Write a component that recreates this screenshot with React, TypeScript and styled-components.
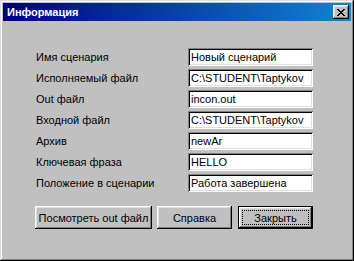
import { Fragment } from "react";
import styled, { createGlobalStyle } from "styled-components";

const GlobalStyle = createGlobalStyle`
  html, body {
    margin: 0;
    padding: 0;
    background: #c0c0c0;
  }
  * {
    box-sizing: border-box;
  }
`;

const Window = styled.div`
  width: 354px;
  height: 261px;
  padding: 3px;
  background: #c0c0c0;
  box-shadow: inset -1px -1px #000, inset 1px 1px #dfdfdf,
    inset -2px -2px #808080, inset 2px 2px #fff;
  font-family: "Liberation Sans", Arial, sans-serif;
  font-size: 11px;
  color: #000;
  display: flex;
  flex-direction: column;
`;

const TitleBar = styled.div`
  height: 18px;
  display: flex;
  align-items: center;
  justify-content: space-between;
  padding: 0 2px 0 4px;
  background: linear-gradient(to right, #000080, #1084d0);
  color: #fff;
  font-weight: bold;
  font-size: 11px;
`;

const CloseButton = styled.button`
  width: 16px;
  height: 14px;
  padding: 0;
  border: none;
  background: #c0c0c0;
  box-shadow: inset -1px -1px #000, inset 1px 1px #fff,
    inset -2px -2px #808080, inset 2px 2px #dfdfdf;
  display: flex;
  align-items: center;
  justify-content: center;
`;

const Content = styled.div`
  padding: 27px 0 0 32px;
  display: flex;
  flex-direction: column;
`;

const Fields = styled.div`
  display: grid;
  grid-template-columns: 153px 125px;
  row-gap: 3px;
  align-items: center;
`;

const Label = styled.span`
  padding-left: 1px;
  line-height: 18px;
  white-space: nowrap;
`;

const Field = styled.div`
  height: 18px;
  background: #fff;
  box-shadow: inset 1px 1px #808080, inset -1px -1px #fff,
    inset 2px 2px #000, inset -2px -2px #dfdfdf;
  padding: 0 2px 0 3px;
  line-height: 18px;
  white-space: nowrap;
  overflow: hidden;
`;

const Buttons = styled.div`
  display: flex;
  gap: 5px;
  margin-top: 14px;
`;

const Button = styled.button<{ $width: number; $default?: boolean }>`
  width: ${(p) => p.$width}px;
  height: 23px;
  padding: 0;
  border: ${(p) => (p.$default ? "1px solid #000" : "none")};
  background: #c0c0c0;
  font-family: inherit;
  font-size: 11px;
  color: #000;
  box-shadow: inset -1px -1px #000, inset 1px 1px #fff,
    inset -2px -2px #808080, inset 2px 2px #dfdfdf;
  display: flex;
  align-items: center;
  justify-content: center;
  margin-left: ${(p) => (p.$default ? "1px" : "0")};
`;

const Focus = styled.span`
  width: calc(100% - 6px);
  height: calc(100% - 6px);
  border: 1px dotted #000;
  display: flex;
  align-items: center;
  justify-content: center;
`;

const rows: [string, string][] = [
  ["Имя сценария", "Новый сценарий"],
  ["Исполняемый файл", "C:\\STUDENT\\Taptykov"],
  ["Out файл", "incon.out"],
  ["Входной файл", "C:\\STUDENT\\Taptykov"],
  ["Архив", "newAr"],
  ["Ключевая фраза", "HELLO"],
  ["Положение в сценарии", "Работа завершена"],
];

export default function App() {
  return (
    <>
      <GlobalStyle />
      <Window>
        <TitleBar>
          <span>Информация</span>
          <CloseButton>
            <svg width="8" height="7" viewBox="0 0 8 7">
              <path
                d="M0 0h2v1h1v1h2v-1h1v-1h2v1h-1v1h-1v1h-1v1h1v1h1v1h1v1h-2v-1h-1v-1h-2v1h-1v1h-2v-1h1v-1h1v-1h1v-1h-1v-1h-1v-1h-1z"
                fill="#000"
              />
            </svg>
          </CloseButton>
        </TitleBar>
        <Content>
          <Fields>
            {rows.map(([label, value]) => (
              <Fragment key={label}>
                <Label>{label}</Label>
                <Field>{value}</Field>
              </Fragment>
            ))}
          </Fields>
          <Buttons>
            <Button $width={117}>Посмотреть out файл</Button>
            <Button $width={75}>Справка</Button>
            <Button $width={75} $default>
              <Focus>Закрыть</Focus>
            </Button>
          </Buttons>
        </Content>
      </Window>
    </>
  );
}
